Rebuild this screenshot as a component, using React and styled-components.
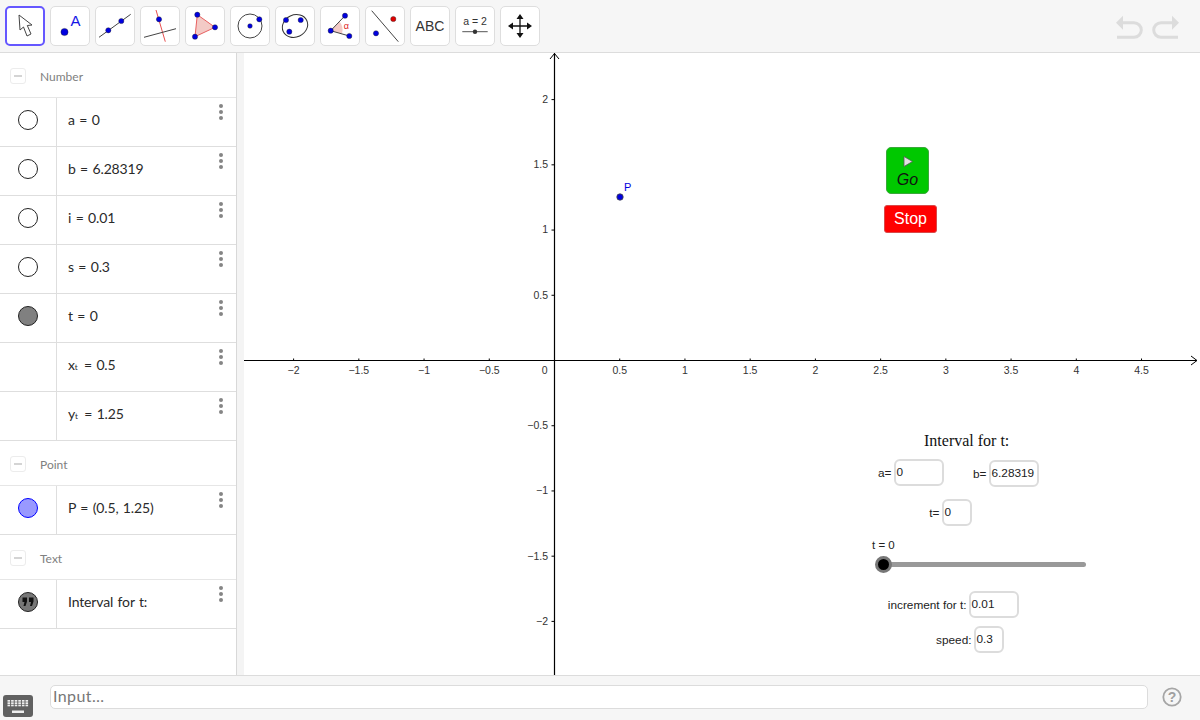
import React from "react";
import styled, { createGlobalStyle } from "styled-components";

const Global = createGlobalStyle`
  html, body { margin: 0; padding: 0; background: #fff; }
  body { font-family: "Liberation Sans", Arial, sans-serif; overflow: hidden; }
  #root { height: 720px; }
`;

const Shell = styled.div`
  display: grid;
  grid-template-rows: 53px 622px 45px;
  width: 1200px;
  height: 720px;
`;

const Toolbar = styled.header`
  display: flex;
  align-items: flex-start;
  justify-content: space-between;
  box-sizing: border-box;
  padding: 6px 19px 0 5px;
  background: #f6f6f6;
  border-bottom: 1px solid #dcdcdc;
`;
const ToolGroup = styled.div`
  display: flex;
  gap: 5px;
`;
const ToolButton = styled.button`
  display: flex;
  align-items: center;
  justify-content: center;
  box-sizing: border-box;
  width: 40px;
  height: 40px;
  padding: 0 0 2px;
  background: #fff;
  border: ${(p) => (p.$active ? "2px solid #6557ff" : "1px solid #dedede")};
  border-radius: 5px;
  svg { flex: none; }
`;
const HistoryIcons = styled.div`
  display: flex;
  gap: 3px;
  margin-top: 6px;
`;

const Main = styled.main`
  display: flex;
  min-height: 0;
`;
const Sidebar = styled.aside`
  width: 236px;
  background: #fff;
`;
const Splitter = styled.div`
  box-sizing: border-box;
  width: 8px;
  background: #f4f4f4;
  border-left: 1px solid #d8d8d8;
`;
const Canvas = styled.section`
  position: relative;
  flex: 1;
  background: #fff;
  overflow: hidden;
`;
const GroupHeader = styled.div`
  display: flex;
  align-items: center;
  gap: 14px;
  box-sizing: border-box;
  height: 45px;
  padding: 2px 0 0 10px;
  border-bottom: 1px solid #e6e6e6;
  font-family: Lato, sans-serif;
  font-size: 12px;
  color: #808080;
`;
const Collapser = styled.span`
  display: flex;
  align-items: center;
  justify-content: center;
  box-sizing: border-box;
  width: 16px;
  height: 16px;
  border: 1px solid #ececec;
  border-radius: 3px;
  &::before {
    content: "";
    width: 8px;
    height: 2px;
    background: #d4d4d4;
  }
`;
const Row = styled.div`
  display: flex;
  box-sizing: border-box;
  height: 49px;
  border-bottom: 1px solid #dedede;
`;
const MarbleCell = styled.div`
  display: flex;
  align-items: center;
  justify-content: center;
  box-sizing: border-box;
  width: 57px;
  padding-bottom: 4px;
  border-right: 1px solid #dedede;
`;
const Marble = styled.span`
  display: flex;
  align-items: center;
  justify-content: center;
  box-sizing: border-box;
  width: 20px;
  height: 20px;
  border-radius: 50%;
  border: 1px solid ${(p) => p.$border || "#222"};
  background: ${(p) => p.$fill || "#fff"};
`;
const Formula = styled.div`
  flex: 1;
  display: flex;
  align-items: center;
  white-space: pre;
  padding: 0 0 6px 11px;
  font-family: Lato, sans-serif;
  font-size: 14px;
  letter-spacing: -0.15px;
  word-spacing: 1px;
  color: #2a2a2a;
  sub {
    font-size: 8px;
    line-height: 0;
    position: relative;
    top: 3px;
    vertical-align: baseline;
    margin-right: 2px;
  }
`;
const MoreMenu = styled.div`
  display: flex;
  flex-direction: column;
  gap: 2px;
  padding: 6px 13px 0 0;
  i {
    display: block;
    width: 4px;
    height: 4px;
    border-radius: 50%;
    background: #858585;
  }
`;

const AxisSvg = styled.svg`
  display: block;
  width: 956px;
  height: 622px;
  text {
    font-family: "Liberation Sans", Arial, sans-serif;
    font-size: 10.5px;
    fill: #333;
  }
`;

const GoButton = styled.button`
  position: absolute;
  left: 642px;
  top: 94px;
  display: flex;
  flex-direction: column;
  align-items: center;
  box-sizing: border-box;
  width: 43px;
  height: 47px;
  padding: 8px 0 0;
  background: #00c800;
  border: 1px solid #3aa83a;
  border-radius: 5px;
  font-family: "Liberation Sans", Arial, sans-serif;
  font-size: 16px;
  font-style: italic;
  line-height: 18px;
  color: #111;
  svg { flex: none; margin-bottom: 4px; }
`;
const StopButton = styled.button`
  position: absolute;
  left: 640px;
  top: 152px;
  box-sizing: border-box;
  width: 53px;
  height: 28px;
  padding: 0;
  background: #ff0000;
  border: 1px solid #d84a4a;
  border-radius: 3px;
  font-family: "Liberation Sans", Arial, sans-serif;
  font-size: 16px;
  color: #fff;
`;
const Title = styled.div`
  position: absolute;
  left: 680px;
  top: 378px;
  font-family: "Liberation Serif", "Times New Roman", serif;
  font-size: 16px;
  line-height: 20px;
  color: #111;
`;
const Field = styled.label`
  position: absolute;
  right: ${(p) => 956 - p.$right}px;
  top: ${(p) => p.$top}px;
  display: flex;
  align-items: center;
  gap: 2px;
  font-size: 11.8px;
  color: #222;
`;
const FieldBox = styled.span`
  display: block;
  box-sizing: border-box;
  width: ${(p) => p.$w}px;
  height: 27px;
  padding: 4px 0 0 1px;
  border: 2px solid #dcdcdc;
  border-radius: 6px;
  background: #fff;
  font-size: 11.8px;
  line-height: 14px;
`;
const SliderLabel = styled.div`
  position: absolute;
  left: 628px;
  top: 485px;
  font-size: 11.5px;
  line-height: 14px;
  color: #222;
`;
const SliderTrack = styled.div`
  position: absolute;
  left: 639px;
  top: 509px;
  width: 203px;
  height: 5px;
  border-radius: 3px;
  background: #999;
`;
const SliderKnob = styled.div`
  position: absolute;
  left: 631px;
  top: 503px;
  box-sizing: border-box;
  width: 17px;
  height: 17px;
  border-radius: 50%;
  background: #000;
  border: 3px solid #777;
`;

const Bottom = styled.footer`
  display: flex;
  align-items: flex-start;
  box-sizing: border-box;
  background: #f6f6f6;
  border-top: 1px solid #dcdcdc;
`;
const KeyboardButton = styled.div`
  margin: 19px 0 0 3px;
  line-height: 0;
`;
const InputBar = styled.div`
  display: flex;
  align-items: center;
  box-sizing: border-box;
  width: 1098px;
  height: 24px;
  margin: 9px 0 0 17px;
  padding: 0 0 3px 2px;
  background: #fff;
  border: 1px solid #dcdcdc;
  border-radius: 5px;
  font-family: Lato, sans-serif;
  font-size: 16px;
  letter-spacing: 0.4px;
  color: #777;
`;
const HelpButton = styled.div`
  margin: 11px 0 0 14px;
  line-height: 0;
`;

const Dot = ({ x, y, r = 2.6, c = "#0000e0" }) => (
  <circle cx={x} cy={y} r={r} fill={c} stroke="#222" strokeWidth="0.4" />
);
const Ico = ({ children }) => (
  <svg width="38" height="38" viewBox="0 0 38 38">{children}</svg>
);

const tools = [
  <Ico>
    <path d="M13 9 L14 24 L17.5 21 L21 30 L25 28 L21.3 19.5 L26 19 Z" fill="#fff" stroke="#444" strokeWidth="1" strokeLinejoin="round" />
  </Ico>,
  <Ico>
    <circle cx="13.5" cy="26" r="3.6" fill="#0000e0" stroke="#222" strokeWidth="0.4" />
    <text x="19.5" y="20" fontFamily="Liberation Sans" fontSize="15" fill="#1414e6">A</text>
  </Ico>,
  <Ico>
    <line x1="3" y1="31.3" x2="34.7" y2="8.3" stroke="#444" strokeWidth="1" />
    <Dot x={12.3} y={24.3} />
    <Dot x={25.3} y={15} />
  </Ico>,
  <Ico>
    <line x1="15" y1="4" x2="24.3" y2="35.7" stroke="#e85050" strokeWidth="1" />
    <line x1="3" y1="31.3" x2="35" y2="22.7" stroke="#444" strokeWidth="1" />
    <Dot x={18} y={13.3} />
  </Ico>,
  <Ico>
    <polygon points="11.3,8.7 29,21.3 9,30.7" fill="#f3cac6" stroke="#e86060" strokeWidth="1" />
    <Dot x={11.3} y={8.7} />
    <Dot x={29} y={21.3} />
    <Dot x={9} y={30.7} />
  </Ico>,
  <Ico>
    <circle cx="19" cy="20" r="12" fill="none" stroke="#444" strokeWidth="1" />
    <Dot x={19} y={20} r={2.3} />
    <Dot x={28.3} y={13.3} />
  </Ico>,
  <Ico>
    <ellipse cx="19" cy="20" rx="13" ry="11" transform="rotate(-25 19 20)" fill="none" stroke="#333" strokeWidth="1" />
    <Dot x={10} y={14} />
    <Dot x={24.7} y={14} />
    <Dot x={13.3} y={25.7} />
  </Ico>,
  <Ico>
    <path d="M9.7 24.7 L18.5 15.5 A13 13 0 0 1 21 27.7 Z" fill="#f3cac6" stroke="none" />
    <path d="M24 9.7 L9.7 24.7 L28.3 30" fill="none" stroke="#444" strokeWidth="1" />
    <text x="22.8" y="23" fontFamily="Liberation Sans" fontSize="9" fill="#e02020">α</text>
    <Dot x={9.7} y={24.7} />
    <Dot x={24} y={9.7} />
    <Dot x={28.3} y={30} />
  </Ico>,
  <Ico>
    <line x1="5.7" y1="4.7" x2="32.3" y2="35.7" stroke="#444" strokeWidth="1" />
    <Dot x={27.3} y={13} c="#e00000" />
    <Dot x={10} y={27.3} />
  </Ico>,
  <Ico>
    <text x="19" y="25" textAnchor="middle" fontFamily="Liberation Sans" fontSize="14" fill="#333">ABC</text>
  </Ico>,
  <Ico>
    <text x="19" y="19" textAnchor="middle" fontFamily="Liberation Sans" fontSize="10.5" fill="#333">a = 2</text>
    <line x1="6.3" y1="25.7" x2="31.7" y2="25.7" stroke="#555" strokeWidth="1" />
    <circle cx="19" cy="25.7" r="2.2" fill="#333" />
  </Ico>,
  <Ico>
    <path d="M19 10 V30 M9 20 H29" stroke="#111" strokeWidth="1.3" />
    <path d="M19 8 L22.5 13 H15.5 Z M19 32 L22.5 27 H15.5 Z M7 20 L12 16.5 V23.5 Z M31 20 L26 16.5 V23.5 Z" fill="#111" />
  </Ico>,
];

const Undo = ({ flip }) => (
  <svg width="32" height="28" viewBox="0 0 32 28" style={flip ? { transform: "scaleX(-1)" } : undefined}>
    <path d="M8 10.7 H20 A7.3 7.3 0 0 1 20 25.3 H3" fill="none" stroke="#dcdcdc" strokeWidth="3" />
    <path d="M2 10.7 L9 3.7 V17.7 Z" fill="#dcdcdc" />
  </svg>
);

const rows = {
  Number: [
    { f: "a = 0", m: {} },
    { f: "b = 6.28319", m: {} },
    { f: "i = 0.01", m: {} },
    { f: "s = 0.3", m: {} },
    { f: "t = 0", m: { $fill: "#808080" } },
    { f: <>x<sub>t</sub> = 0.5</> },
    { f: <>y<sub>t</sub> = 1.25</> },
  ],
  Point: [{ f: "P = (0.5, 1.25)", m: { $fill: "#9999ff", $border: "#0000ff" } }],
  Text: [{ f: "Interval for t:", m: { $fill: "#777" }, quote: true }],
};

const xTicks = [
  [-2, "−2"], [-1.5, "−1.5"], [-1, "−1"], [-0.5, "−0.5"], [0.5, "0.5"], [1, "1"], [1.5, "1.5"], [2, "2"],
  [2.5, "2.5"], [3, "3"], [3.5, "3.5"], [4, "4"], [4.5, "4.5"],
];
const yTicks = [
  [2, "2"], [1.5, "1.5"], [1, "1"], [0.5, "0.5"], [-0.5, "−0.5"], [-1, "−1"], [-1.5, "−1.5"], [-2, "−2"],
];
const X0 = 554.5, Y0 = 360.5, U = 130.45;

const Graph = () => (
  <AxisSvg viewBox="244 53 956 622">
    <g stroke="#000" fill="none">
      <line x1="244" y1={Y0} x2="1197" y2={Y0} strokeWidth="1.2" />
      <line x1={X0} y1="53" x2={X0} y2="675" strokeWidth="1.2" />
      <path d="M1191 356 L1197 360.5 L1191 365" strokeWidth="1" />
      <path d="M550 59 L554.5 53.5 L559 59" strokeWidth="1" />
      {xTicks.map(([v]) => (
        <line key={v} x1={X0 + v * U} y1={Y0 - 2} x2={X0 + v * U} y2={Y0} strokeWidth="1" />
      ))}
      {yTicks.map(([v]) => (
        <line key={v} x1={X0 - 3} y1={Y0 - v * U} x2={X0} y2={Y0 - v * U} strokeWidth="1" />
      ))}
    </g>
    {xTicks.map(([v, t]) => (
      <text key={v} x={X0 + v * U} y="374" textAnchor="middle">{t}</text>
    ))}
    <text x="544.7" y="374" textAnchor="middle">0</text>
    {yTicks.map(([v, t]) => (
      <text key={v} x="548" y={Y0 - v * U + 3.4} textAnchor="end">{t}</text>
    ))}
    <circle cx="620" cy="197" r="3.2" fill="#0000e0" stroke="#444" strokeWidth="0.8" />
    <text x="624" y="191" style={{ fill: "#0000e0", fontSize: 11 }}>P</text>
  </AxisSvg>
);

export default function App() {
  return (
    <Shell>
      <Global />
      <Toolbar>
        <ToolGroup>
          {tools.map((icon, i) => (
            <ToolButton key={i} $active={i === 0}>{icon}</ToolButton>
          ))}
        </ToolGroup>
        <HistoryIcons>
          <Undo />
          <Undo flip />
        </HistoryIcons>
      </Toolbar>
      <Main>
        <Sidebar>
          {Object.entries(rows).map(([group, items]) => (
            <div key={group}>
              <GroupHeader><Collapser />{group}</GroupHeader>
              {items.map((r, i) => (
                <Row key={i}>
                  <MarbleCell>
                    {r.m && (
                      <Marble {...r.m}>
                        {r.quote && (
                          <svg width="12" height="10" viewBox="0 0 12 10">
                            <path d="M0.5 0.5 H5 V4.5 L3.5 9 H1.5 L2.5 5 H0.5 Z M7 0.5 H11.5 V4.5 L10 9 H8 L9 5 H7 Z" fill="#111" />
                          </svg>
                        )}
                      </Marble>
                    )}
                  </MarbleCell>
                  <Formula>{r.f}</Formula>
                  <MoreMenu><i /><i /><i /></MoreMenu>
                </Row>
              ))}
            </div>
          ))}
        </Sidebar>
        <Splitter />
        <Canvas>
          <Graph />
          <GoButton>
            <svg width="10" height="11" viewBox="0 0 10 11">
              <path d="M1 0.5 L9.5 5.5 L1 10.5 Z" fill="#e0e0e0" stroke="#555" strokeWidth="0.8" />
            </svg>
            Go
          </GoButton>
          <StopButton>Stop</StopButton>
          <Title>Interval for t:</Title>
          <Field $right={699.5} $top={406}>a=<FieldBox $w={50}>0</FieldBox></Field>
          <Field $right={794.5} $top={407}>b=<FieldBox $w={50}>6.28319</FieldBox></Field>
          <Field $right={727.5} $top={446}>t=<FieldBox $w={30}>0</FieldBox></Field>
          <SliderLabel>t = 0</SliderLabel>
          <SliderTrack />
          <SliderKnob />
          <Field $right={774.5} $top={538}>increment for t:<FieldBox $w={50}>0.01</FieldBox></Field>
          <Field $right={759.5} $top={573}>speed:<FieldBox $w={30}>0.3</FieldBox></Field>
        </Canvas>
      </Main>
      <Bottom>
        <KeyboardButton>
          <svg width="30" height="22" viewBox="0 0 30 22">
            <rect width="30" height="22" rx="3" fill="#616161" />
            <g fill="#eee">
              {[0, 1, 2].map((r) =>
                [0, 1, 2, 3, 4, 5].map((c) => (
                  <rect key={`${r}-${c}`} x={4.5 + c * 3.6} y={5 + r * 2.3} width="2.6" height="1.7" />
                ))
              )}
              <rect x="9" y="15.5" width="12" height="2.5" />
            </g>
          </svg>
        </KeyboardButton>
        <InputBar>Input…</InputBar>
        <HelpButton>
          <svg width="20" height="20" viewBox="0 0 20 20">
            <circle cx="10" cy="10" r="8.7" fill="none" stroke="#a6a6a6" strokeWidth="1.8" />
            <text x="10" y="15" textAnchor="middle" fontFamily="Liberation Sans" fontWeight="bold" fontSize="14" fill="#a0a0a0">?</text>
          </svg>
        </HelpButton>
      </Bottom>
    </Shell>
  );
}
